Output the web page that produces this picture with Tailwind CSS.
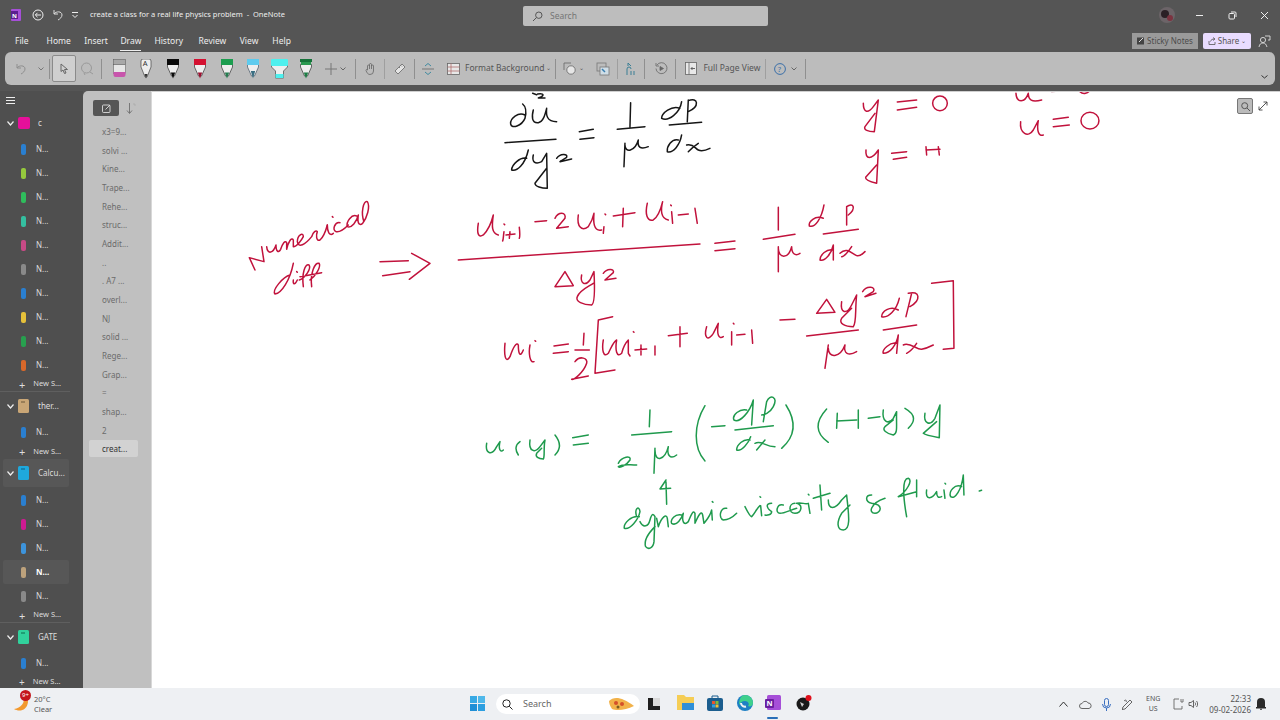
<!DOCTYPE html>
<html><head><meta charset="utf-8"><title>OneNote</title>
<script src="https://cdn.jsdelivr.net/npm/@tailwindcss/browser@4"></script></head>
<body class="m-0">
<div class="w-[1280px] h-[720px] overflow-hidden flex flex-col bg-[#555555] font-['Noto_Sans',sans-serif] text-[#eeeeee]">

<!-- title bar -->
<div class="h-[30px] shrink-0 flex items-center relative">
  <svg class="ml-[11px] w-[10px] h-[12px] shrink-0" viewBox="0 0 10 12"><rect width="10" height="12" rx="1" fill="#a64fd8"/><rect y="2" width="7" height="8" fill="#5a1f8f"/><text x="1" y="8.5" font-size="6" fill="#fff" font-family="Noto Sans" font-weight="700">N</text></svg>
  <svg class="ml-[11px] w-[12px] h-[12px] shrink-0" viewBox="0 0 12 12" fill="none" stroke="#eee" stroke-width="1"><circle cx="6" cy="6" r="5"/><path d="M9 6H3.5M5.5 3.8L3.3 6l2.2 2.2"/></svg>
  <svg class="ml-[8px] w-[12px] h-[12px] shrink-0" viewBox="0 0 12 12" fill="none" stroke="#ddd" stroke-width="1"><path d="M2 1v4h4M2 5c2-3 8-3 8 1 0 2-2 4-4 5"/></svg>
  <svg class="ml-[7px] w-[8px] h-[8px] shrink-0" viewBox="0 0 8 8" fill="none" stroke="#eee" stroke-width="1"><path d="M1 1.5h6"/><path d="M1.5 4L4 6.5 6.5 4"/></svg>
  <span class="ml-[11px] text-[7.5px] leading-none whitespace-nowrap">create a class for a real life physics problem&nbsp; -&nbsp; OneNote</span>
  <div class="absolute left-[523px] top-[6px] w-[245px] h-[20px] bg-[#bdbdbd] rounded-[2px] flex items-center pl-[9px] gap-[7px] text-[#757575] text-[8.5px]">
    <svg class="w-[11px] h-[11px]" viewBox="0 0 11 11" fill="none" stroke="#555" stroke-width="1"><circle cx="6.8" cy="4.2" r="3.2"/><path d="M4.4 6.6L1 10"/></svg><span>Search</span>
  </div>
  <div class="ml-auto flex items-center">
    <svg class="w-[16px] h-[16px]" viewBox="0 0 16 16"><circle cx="8" cy="8" r="8" fill="#6c6468"/><circle cx="6" cy="7" r="4" fill="#2b2025"/><circle cx="11" cy="11" r="3" fill="#7c3340"/></svg>
    <svg class="ml-[20px] w-[9px] h-[9px]" viewBox="0 0 9 9" stroke="#eee"><path d="M1 4.5h7"/></svg>
    <svg class="ml-[24px] w-[9px] h-[9px]" viewBox="0 0 9 9" fill="none" stroke="#eee"><rect x="1" y="2.5" width="5.5" height="5.5" rx="1"/><path d="M3 1h4a1 1 0 011 1v4"/></svg>
    <svg class="ml-[23px] mr-[11px] w-[9px] h-[9px]" viewBox="0 0 9 9" stroke="#eee"><path d="M1 1l7 7M8 1L1 8"/></svg>
  </div>
</div>

<!-- tabs -->
<div class="h-[22px] shrink-0 flex items-center relative text-[8.5px] leading-none">
  <span class="ml-[15px]">File</span>
  <span class="ml-[18px]">Home</span>
  <span class="ml-[13.5px]">Insert</span>
  <span class="ml-[12.5px] relative">Draw<span class="absolute left-0 right-0 top-[13px] h-px bg-[#eee]"></span></span>
  <span class="ml-[13px]">History</span>
  <span class="ml-[15.5px]">Review</span>
  <span class="ml-[13.5px]">View</span>
  <span class="ml-[14px]">Help</span>
  <div class="ml-auto flex items-center h-[16px]">
    <div class="w-[66px] h-[16px] bg-[#9a9a9a] flex items-center justify-center gap-[2px] text-[8px] text-[#4c4c4c]">
      <svg class="w-[8px] h-[8px]" viewBox="0 0 8 8"><rect width="7" height="7" y=".5" fill="#444"/><path d="M2 5l4-4" stroke="#ddd"/></svg>Sticky Notes
    </div>
    <div class="ml-[5px] w-[48px] h-[16px] bg-[#e9dcff] rounded-[2px] flex items-center justify-center gap-[2px] text-[8px] text-[#555]">
      <svg class="w-[8px] h-[8px]" viewBox="0 0 8 8" fill="none" stroke="#555" stroke-width=".8"><path d="M1 4v3.5h6V5"/><path d="M2.5 4.5C3 2.5 4.5 2 6.5 2M5 .5L7 2 5 3.5"/></svg>Share<span class="text-[6px]">⌄</span>
    </div>
    <svg class="ml-[7px] mr-[9px] w-[13px] h-[13px]" viewBox="0 0 13 13" fill="none" stroke="#ddd" stroke-width=".9"><circle cx="5" cy="5" r="2.6"/><path d="M1 12c.5-3 2-4 4-4s3 1 4 4M7 1h5v4h-2"/></svg>
  </div>
</div>

<!-- ribbon -->
<div class="h-[33px] shrink-0 mx-[5px] bg-[#bcbcbc] rounded-[6px] flex items-center text-[#555] relative">
  <svg class="ml-[10px] w-[12px] h-[12px] shrink-0" viewBox="0 0 12 12" fill="none" stroke="#8e8e8e" stroke-width="1"><path d="M2 1v4h4M2 5c2-3 8-3 8 1 0 2-2 4-4 5"/></svg>
  <svg class="ml-[11px] w-[6px] h-[4px] shrink-0" viewBox="0 0 6 4" fill="none" stroke="#777"><path d="M.5.5L3 3 5.500.5"/></svg>
  <span class="ml-[5px] w-px h-[20px] bg-[#8f8f8f] shrink-0"></span>
  <div class="ml-[2px] w-[24px] h-[27px] shrink-0 border border-[#8a8a8a] bg-[#cfcfcf] rounded-[2px] flex items-center justify-center">
    <svg class="w-[9px] h-[11px]" viewBox="0 0 9 11" fill="none" stroke="#666"><path d="M1 1l6.500 5.500H4.500L6 10 4.500 10.500 3 7 1 8.500z"/></svg>
  </div>
  <svg class="ml-[4px] w-[14px] h-[14px] shrink-0" viewBox="0 0 14 14" fill="none" stroke="#999"><circle cx="6.500" cy="6" r="5"/><path d="M10 10l3 2M4 11l1 2"/></svg>
  <span class="ml-[7px] w-px h-[20px] bg-[#8f8f8f] shrink-0"></span>

  <svg class="ml-[11px] w-[13px] h-[19px] shrink-0" viewBox="0 0 13 19"><rect x=".5" y=".5" width="12" height="5" fill="#a8a8a8" stroke="#555" stroke-width=".5"/><rect x=".5" y="5.500" width="12" height="9" fill="#e6e6e6" stroke="#555" stroke-width=".5"/><path d="M.5 13h12v3a2 2 0 01-2 2h-8a2 2 0 01-2-2z" fill="#c855ac"/></svg>
  <svg class="ml-[13px] w-[14px] h-[20px] shrink-0" viewBox="0 0 14 20"><path d="M2 2a2 2 0 012-2h6a2 2 0 012 2v6L8 18H6L2 8z" fill="#eee" stroke="#444" stroke-width=".7"/><text x="3.700" y="7" font-size="7.500" fill="#333" font-family="Noto Sans">A</text><path d="M5.500 15h3L7 19.500z" fill="#333"/></svg>
  <svg class="ml-[13px] w-[14px] h-[20px] shrink-0" viewBox="0 0 14 20"><path d="M1.500 5.500h11V8L8.500 17H5.500L1.500 8z" fill="#eee" stroke="#333" stroke-width=".7"/><rect x="1" width="12" height="6" fill="#0a0a0a"/><path d="M4.800 13.500h4.400L7 19.500z" fill="#0a0a0a"/></svg>
  <svg class="ml-[13px] w-[14px] h-[20px] shrink-0" viewBox="0 0 14 20"><path d="M1.500 5.500h11V8L8.500 17H5.500L1.500 8z" fill="#eee" stroke="#333" stroke-width=".7"/><rect x="1" width="12" height="6" fill="#d41131"/><path d="M4.800 13.500h4.400L7 19.500z" fill="#9c1030"/></svg>
  <svg class="ml-[13px] w-[14px] h-[20px] shrink-0" viewBox="0 0 14 20"><path d="M1.500 5.500h11V8L8.500 17H5.500L1.500 8z" fill="#eee" stroke="#333" stroke-width=".7"/><rect x="1" width="12" height="6" fill="#1d9e50"/><path d="M4.800 13.500h4.400L7 19.500z" fill="#267d51"/></svg>
  <svg class="ml-[12px] w-[14px] h-[20px] shrink-0" viewBox="0 0 14 20"><path d="M1.500 5.500h11V8L8.500 17H5.500L1.500 8z" fill="#eee" stroke="#456" stroke-width=".7"/><rect x="1" width="12" height="6" fill="#5ecbee"/><path d="M4.800 12h4.400L7 19.500z" fill="#3a6e82"/></svg>
  <svg class="ml-[11px] w-[17px] h-[20px] shrink-0" viewBox="0 0 17 20"><path d="M.5 5.500h16V8l-4 4v7h-8v-7l-4-4z" fill="#eee" stroke="#444" stroke-width=".7"/><rect width="17" height="7" rx="1" fill="#4ff0ee"/><path d="M4.500 15h8v4h-8z" fill="#4ff0ee"/></svg>
  <svg class="ml-[11px] w-[14px] h-[20px] shrink-0" viewBox="0 0 14 20"><path d="M1.500 5.500h11V8L8.500 17H5.500L1.500 8z" fill="#eee" stroke="#333" stroke-width=".7"/><rect x="1" width="12" height="3" fill="#16723a"/><rect x="2" y="3" width="10" height="3" fill="#2a9950"/><path d="M4.800 13.500h4.400L7 19.500z" fill="#1d7d45"/></svg>

  <svg class="ml-[12px] w-[12px] h-[12px] shrink-0" viewBox="0 0 12 12" stroke="#777"><path d="M0 6h12M6 0v12"/></svg>
  <svg class="ml-[3px] w-[6px] h-[4px] shrink-0" viewBox="0 0 6 4" fill="none" stroke="#666"><path d="M.5.500L3 3 5.500.500"/></svg>
  <span class="ml-[9px] w-px h-[20px] bg-[#8f8f8f] shrink-0"></span>
  <svg class="ml-[9px] w-[10px] h-[12px] shrink-0" viewBox="0 0 10 12" fill="none" stroke="#666" stroke-width=".8"><path d="M2.500 7V3a1 1 0 012 0M4.500 6V1.500a1 1 0 012 0V6M6.500 3a1 1 0 012 0v5a3.500 3.500 0 01-3.500 3.500C3 11.500 2 10 1 7.500c-.3-1 1-1.500 1.500-.5"/></svg>
  <span class="ml-[9px] w-px h-[20px] bg-[#9f9f9f] shrink-0"></span>
  <svg class="ml-[9px] w-[12px] h-[12px] shrink-0" viewBox="0 0 12 12" fill="#e4e4e4" stroke="#666" stroke-width=".8"><path d="M8 1l3 3-7 7-3-3z"/><path d="M5 4l1 1M7 2.500l1 1" fill="none"/></svg>
  <span class="ml-[8px] w-px h-[20px] bg-[#8f8f8f] shrink-0"></span>
  <svg class="ml-[7px] w-[12px] h-[12px] shrink-0" viewBox="0 0 12 12" fill="none" stroke="#3f8aa0"><path d="M3 3l3-2.500L9 3M3 9l3 2.500L9 9"/><path d="M0 6h12" stroke="#777"/></svg>
  <svg class="ml-[13px] w-[13px] h-[12px] shrink-0" viewBox="0 0 13 12" fill="#e8e8e8" stroke="#666" stroke-width=".8"><rect x=".5" y=".5" width="12" height="11"/><path d="M4 .5v11M.5 4h12M.5 8h12" stroke="#b07070"/></svg>
  <span class="ml-[5px] text-[8.5px] whitespace-nowrap shrink-0">Format Background</span><span class="ml-[2px] text-[6px] shrink-0">⌄</span>
  <span class="ml-[4px] w-px h-[20px] bg-[#8f8f8f] shrink-0"></span>
  <svg class="ml-[7px] w-[13px] h-[13px] shrink-0" viewBox="0 0 13 13" fill="#e6e6e6" stroke="#666" stroke-width=".8"><path d="M1 8V1h7" fill="none"/><circle cx="8" cy="8" r="4.200"/></svg>
  <span class="ml-[3px] text-[6px] shrink-0">⌄</span>
  <svg class="ml-[12px] w-[14px] h-[14px] shrink-0" viewBox="0 0 14 14" fill="none" stroke="#777" stroke-width=".8"><rect x="1" y="1" width="9" height="8"/><rect x="4" y="5" width="9" height="8" fill="#cfdde6"/><path d="M6 7l3 3" stroke="#3a7fb0" stroke-width="1.500"/></svg>
  <span class="ml-[7px] w-px h-[20px] bg-[#9f9f9f] shrink-0"></span>
  <svg class="ml-[6px] w-[12px] h-[14px] shrink-0" viewBox="0 0 12 14" fill="none" stroke="#3a7f95"><path d="M7 4L4 1M4 1v3"/><path d="M3 13V7a2 2 0 014 0M7 9v4M10 9v4" /></svg>
  <span class="ml-[8px] w-px h-[20px] bg-[#8f8f8f] shrink-0"></span>
  <svg class="ml-[10px] w-[13px] h-[13px] shrink-0" viewBox="0 0 13 13" fill="none" stroke="#666" stroke-width=".8"><path d="M2 3a5.500 5.500 0 11-1 3.500M1 1v3h3"/><path d="M5 4.500v4l3.500-2z" fill="#666"/></svg>
  <span class="ml-[7px] w-px h-[20px] bg-[#8f8f8f] shrink-0"></span>
  <svg class="ml-[9px] w-[12px] h-[13px] shrink-0" viewBox="0 0 12 13" fill="#e8e8e8" stroke="#666" stroke-width=".8"><rect x=".5" y=".5" width="11" height="12"/><path d="M4 .5v12" /><path d="M10 6.500H6M7.500 5L6 6.500 7.500 8" fill="none" stroke="#444"/></svg>
  <span class="ml-[6px] text-[8.5px] whitespace-nowrap shrink-0">Full Page View</span>
  <span class="ml-[5px] w-px h-[20px] bg-[#9f9f9f] shrink-0"></span>
  <svg class="ml-[8px] w-[12px] h-[12px] shrink-0" viewBox="0 0 12 12" fill="none" stroke="#3a6fa8"><circle cx="6" cy="6" r="5.400"/><text x="3.800" y="8.800" font-size="7.500" fill="#3a6fa8" stroke="none" font-family="Noto Sans">?</text></svg>
  <svg class="ml-[5px] w-[6px] h-[4px] shrink-0" viewBox="0 0 6 4" fill="none" stroke="#666"><path d="M.5.500L3 3 5.500.500"/></svg>
  <span class="ml-[8px] w-px h-[20px] bg-[#8f8f8f] shrink-0"></span>
  <svg class="absolute right-[7px] bottom-[6px] w-[7px] h-[4px]" viewBox="0 0 7 4" fill="none" stroke="#333"><path d="M.5.500L3.500 3 6.500.500"/></svg>
</div>

<div class="h-[6px] shrink-0"></div>

<!-- main -->
<div class="flex-1 min-h-0 flex">
  <!-- notebooks -->
  <div class="w-[83px] shrink-0 bg-[#4f4f4f] text-[#dddddd] text-[8px] overflow-hidden leading-none">
    <div class="h-[18px] flex items-center pl-[6px]"><svg class="w-[9px] h-[7px]" viewBox="0 0 9 7" stroke="#eee"><path d="M0 .5h9M0 3.500h9M0 6.500h9"/></svg></div>

    <div class="h-[28px] flex items-center"><svg class="ml-[7px] w-[7px] h-[5px]" viewBox="0 0 7 5" fill="none" stroke="#eee" stroke-width="1.200"><path d="M.5.500L3.500 4 6.500.500"/></svg><span class="ml-[4px] w-[12px] h-[12px] rounded-[2px] bg-[#e6109a]"></span><span class="ml-[8px]">c</span></div>
    <div class="h-[24px] flex items-center pl-[21px]"><span class="w-[5px] h-[11px] rounded-[2px] bg-[#2a7fd0]"></span><span class="ml-[10px]">N...</span></div>
    <div class="h-[24px] flex items-center pl-[21px]"><span class="w-[5px] h-[11px] rounded-[2px] bg-[#96c93d]"></span><span class="ml-[10px]">N...</span></div>
    <div class="h-[24px] flex items-center pl-[21px]"><span class="w-[5px] h-[11px] rounded-[2px] bg-[#2fbd5c]"></span><span class="ml-[10px]">N...</span></div>
    <div class="h-[24px] flex items-center pl-[21px]"><span class="w-[5px] h-[11px] rounded-[2px] bg-[#34bfa0]"></span><span class="ml-[10px]">N...</span></div>
    <div class="h-[24px] flex items-center pl-[21px]"><span class="w-[5px] h-[11px] rounded-[2px] bg-[#c84a86]"></span><span class="ml-[10px]">N...</span></div>
    <div class="h-[24px] flex items-center pl-[21px]"><span class="w-[5px] h-[11px] rounded-[2px] bg-[#8a8a8a]"></span><span class="ml-[10px]">N...</span></div>
    <div class="h-[24px] flex items-center pl-[21px]"><span class="w-[5px] h-[11px] rounded-[2px] bg-[#2a7fd0]"></span><span class="ml-[10px]">N...</span></div>
    <div class="h-[24px] flex items-center pl-[21px]"><span class="w-[5px] h-[11px] rounded-[2px] bg-[#e6c13a]"></span><span class="ml-[10px]">N...</span></div>
    <div class="h-[24px] flex items-center pl-[21px]"><span class="w-[5px] h-[11px] rounded-[2px] bg-[#27a04e]"></span><span class="ml-[10px]">N...</span></div>
    <div class="h-[24px] flex items-center pl-[21px]"><span class="w-[5px] h-[11px] rounded-[2px] bg-[#d9682a]"></span><span class="ml-[10px]">N...</span></div>
    <div class="h-[15px] flex items-center pl-[19px] border-b border-[#5f5f5f] mr-[13px]"><span class="text-[11px] leading-none">+</span><span class="ml-[8px] text-[7.5px]">New S...</span></div>

    <div class="h-[28px] flex items-center"><svg class="ml-[7px] w-[7px] h-[5px]" viewBox="0 0 7 5" fill="none" stroke="#eee" stroke-width="1.200"><path d="M.5.500L3.500 4 6.500.500"/></svg><svg class="ml-[4px] w-[12px] h-[14px]" viewBox="0 0 12 14"><rect width="11" height="14" rx="1.500" fill="#c9a676"/><path d="M3 3h4" stroke="#6b5638"/></svg><span class="ml-[8px]">ther...</span></div>
    <div class="h-[24px] flex items-center pl-[21px]"><span class="w-[5px] h-[11px] rounded-[2px] bg-[#2a7fd0]"></span><span class="ml-[10px]">N...</span></div>
    <div class="h-[15px] flex items-center pl-[19px]"><span class="text-[11px] leading-none">+</span><span class="ml-[8px] text-[7.5px]">New S...</span></div>

    <div class="h-[28px] mb-px mx-[3px] w-[66px] rounded-[2px] bg-[#575757] flex items-center"><svg class="ml-[4px] w-[7px] h-[5px]" viewBox="0 0 7 5" fill="none" stroke="#eee" stroke-width="1.200"><path d="M.5.500L3.500 4 6.500.500"/></svg><svg class="ml-[4px] w-[12px] h-[14px]" viewBox="0 0 12 14"><rect width="11" height="14" rx="1.500" fill="#1fa8dc"/><path d="M3 3h4" stroke="#0d5d80"/></svg><span class="ml-[8px]">Calcu...</span></div>
    <div class="h-[24px] flex items-center pl-[21px]"><span class="w-[5px] h-[11px] rounded-[2px] bg-[#2a7fd0]"></span><span class="ml-[10px]">N...</span></div>
    <div class="h-[24px] flex items-center pl-[21px]"><span class="w-[5px] h-[11px] rounded-[2px] bg-[#cf1a92]"></span><span class="ml-[10px]">N...</span></div>
    <div class="h-[24px] flex items-center pl-[21px]"><span class="w-[5px] h-[11px] rounded-[2px] bg-[#3d94dc]"></span><span class="ml-[10px]">N...</span></div>
    <div class="h-[24px] flex items-center pl-[18px] ml-[3px] w-[66px] bg-[#575757] rounded-[2px]"><span class="w-[5px] h-[11px] rounded-[2px] bg-[#bda27c]"></span><span class="ml-[10px] font-bold text-white">N...</span></div>
    <div class="h-[24px] flex items-center pl-[21px]"><span class="w-[5px] h-[11px] rounded-[2px] bg-[#8a8a8a]"></span><span class="ml-[10px]">N...</span></div>
    <div class="h-[15px] flex items-center pl-[19px] border-b border-[#5f5f5f] mr-[13px]"><span class="text-[11px] leading-none">+</span><span class="ml-[8px] text-[7.5px]">New S...</span></div>

    <div class="h-[28px] flex items-center"><svg class="ml-[7px] w-[7px] h-[5px]" viewBox="0 0 7 5" fill="none" stroke="#eee" stroke-width="1.200"><path d="M.5.500L3.500 4 6.500.500"/></svg><svg class="ml-[4px] w-[12px] h-[14px]" viewBox="0 0 12 14"><rect width="11" height="14" rx="1.500" fill="#31d19c"/><path d="M3 3h4" stroke="#0f6b4c"/></svg><span class="ml-[8px]">GATE</span></div>
    <div class="h-[24px] flex items-center pl-[21px]"><span class="w-[5px] h-[11px] rounded-[2px] bg-[#2a7fd0]"></span><span class="ml-[10px]">N...</span></div>
    <div class="h-[13px] flex items-center pl-[19px]"><span class="text-[10px] leading-none">+</span><span class="ml-[8px] text-[7.5px]">New S...</span></div>
  </div>

  <!-- pages -->
  <div class="w-[69px] shrink-0 bg-[#c0c0c0] rounded-tl-[5px] text-[8px] text-[#6b6b6b] leading-none border-r border-[#d8d8d8]">
    <div class="h-[31.5px] flex items-center pl-[10px] pt-[3px]">
      <div class="w-[26px] h-[16px] rounded-[2px] bg-[#555] flex items-center justify-center"><svg class="w-[9px] h-[9px]" viewBox="0 0 9 9" fill="none" stroke="#eee" stroke-width=".8"><rect x=".5" y="1" width="7.500" height="7.500" rx="1"/><path d="M3.500 5.500L8 1"/></svg></div>
      <svg class="ml-[7px] w-[10px] h-[11px]" viewBox="0 0 10 11" fill="none" stroke="#666" stroke-width=".8"><path d="M3.500 0v10M1 7.500L3.500 10.500 6 7.500"/><path d="M7 1h2v2" stroke="#aaa"/></svg>
    </div>
    <div class="pl-[19px] h-[18.7px] flex items-center">x3=9...</div>
    <div class="pl-[19px] h-[18.7px] flex items-center">solvi ...</div>
    <div class="pl-[19px] h-[18.7px] flex items-center">Kine...</div>
    <div class="pl-[19px] h-[18.7px] flex items-center">Trape...</div>
    <div class="pl-[19px] h-[18.7px] flex items-center">Rehe...</div>
    <div class="pl-[19px] h-[18.7px] flex items-center">struc...</div>
    <div class="pl-[19px] h-[18.7px] flex items-center">Addit...</div>
    <div class="pl-[19px] h-[18.7px] flex items-center">..</div>
    <div class="pl-[19px] h-[18.7px] flex items-center">. A7 ...</div>
    <div class="pl-[19px] h-[18.7px] flex items-center">overl...</div>
    <div class="pl-[19px] h-[18.7px] flex items-center">NJ</div>
    <div class="pl-[19px] h-[18.7px] flex items-center">solid ...</div>
    <div class="pl-[19px] h-[18.7px] flex items-center">Rege...</div>
    <div class="pl-[19px] h-[18.7px] flex items-center">Grap...</div>
    <div class="pl-[19px] h-[18.7px] flex items-center">=</div>
    <div class="pl-[19px] h-[18.7px] flex items-center">shap...</div>
    <div class="pl-[19px] h-[18.7px] flex items-center">2</div>
    <div class="ml-[6px] w-[49px] pl-[13px] h-[17px] flex items-center bg-[#d2d2d2] rounded-[2px] text-[#333]">creat...</div>
  </div>

  <!-- canvas -->
  <div class="flex-1 bg-white relative overflow-hidden border-t border-[#d0d0d0]">
    <svg class="absolute inset-0 w-full h-full" viewBox="152 92 1128 596" fill="none" stroke-linecap="round" stroke-linejoin="round">
      <!-- black ink -->
      <g transform="translate(240 90) scale(.3333)" stroke="#161616" stroke-width="4.500">
        <path d="M878 10L890 14M893 12C905 10 915 12 905 20L895 24L915 24"/>
        <path d="M855 75C835 65 810 85 812 102C815 118 845 108 855 85C860 65 858 50 848 42"/>
        <path d="M880 60C875 80 875 100 895 98C910 95 915 75 920 55C918 75 920 95 950 95"/>
        <path d="M795 158L948 148"/>
        <path d="M860 205C840 200 815 225 815 240C830 245 855 225 865 180"/>
        <path d="M880 195C875 215 885 225 905 215L920 190L922 295C905 295 885 290 885 280L920 235"/>
        <path d="M950 205C960 190 985 190 980 202L960 215L995 207"/>
        <path d="M1018 125L1060 118M1020 148L1062 143"/>
        <path d="M1172 38L1170 110M1132 118L1215 110"/>
        <path d="M1155 160L1152 230M1155 165C1155 190 1185 185 1195 150C1192 170 1200 180 1225 170"/>
        <path d="M1320 55C1295 45 1265 70 1265 85C1285 95 1320 70 1325 35"/>
        <path d="M1345 30L1342 95M1345 32C1375 20 1380 50 1345 65M1288 105L1385 97"/>
        <path d="M1315 150C1295 145 1280 170 1282 185C1300 190 1320 165 1325 135"/>
        <path d="M1340 165C1360 160 1365 175 1375 180C1385 185 1400 180 1410 175M1375 160C1360 170 1350 180 1345 185"/>
      </g>
      <!-- red ink: numerical diff, finite difference -->
      <g transform="translate(240 90) scale(.3333)" stroke="#c1123c" stroke-width="4.500">
        <path d="M45 540L28 503L72 515L65 470"/>
        <path d="M80 470C82 495 100 490 108 465C108 485 115 490 122 478C128 460 135 450 140 458L140 478C145 455 155 440 160 450L160 470C170 470 185 450 190 440C190 425 172 435 172 455C175 475 195 465 215 440C220 425 228 420 232 425C228 435 228 455 240 450C252 440 258 420 262 405"/>
        <path d="M262 405C262 425 268 440 280 430M277 380L279 382"/>
        <path d="M300 398C285 395 275 420 288 425C300 428 315 415 325 405"/>
        <path d="M350 378C335 372 318 395 322 410C335 415 350 395 355 375C352 395 355 410 368 400C380 385 392 350 382 335C370 330 362 370 372 395"/>
        <path d="M150 555C130 560 95 600 105 612C125 610 150 570 160 520"/>
        <path d="M160 570C158 585 165 585 172 570M170 545L172 547"/>
        <path d="M190 590C185 550 195 520 207 525C215 535 195 565 178 570M215 590C210 550 225 515 237 520C245 530 225 560 210 570M180 560L245 548"/>
        <path d="M420 515L505 512M428 557L510 545M515 490L570 520L508 568"/>
        <path d="M715 400C710 430 715 445 730 435C745 420 755 395 760 375C755 410 755 430 775 435"/>
        <path d="M792 425C790 440 790 450 788 453M792 402L794 404M810 425L808 445M798 435L825 432M838 412C840 430 840 440 838 445"/>
        <path d="M885 395L920 392M945 385C955 365 980 365 975 385L950 415L985 410"/>
        <path d="M1015 375C1010 410 1025 425 1045 410C1055 395 1060 380 1062 370C1060 395 1060 425 1085 420M1092 410L1090 430M1095 372L1097 374"/>
        <path d="M1150 355L1148 410M1120 378L1185 368"/>
        <path d="M1222 340C1215 370 1220 395 1240 390C1255 380 1262 360 1268 335C1262 360 1262 385 1285 390M1295 365L1298 400M1292 345L1294 347M1315 375L1345 372M1365 355L1372 400"/>
        <path d="M655 510L1380 462M1425 460L1485 453M1425 482L1485 476"/>
        <path d="M975 545L945 590L1000 587Z"/>
        <path d="M1025 555C1020 580 1035 590 1050 570L1062 545C1065 600 1065 640 1055 645C1030 645 1005 635 1012 620C1020 600 1045 590 1060 580"/>
        <path d="M1090 550C1100 535 1125 535 1120 548L1095 570L1128 565"/>
      </g>
      <!-- red ink: boundary conditions -->
      <g transform="translate(700 90) scale(.3333)" stroke="#c1123c" stroke-width="4.500">
        <path d="M490 40C490 70 505 70 520 50L535 30L523 125C505 125 490 120 495 110L525 70"/>
        <path d="M592 60L650 52M592 36L650 30"/>
        <ellipse cx="720" cy="40" rx="22" ry="22"/>
        <path d="M498 180C495 210 515 210 535 180L530 280C510 275 495 270 497 262L530 225"/>
        <path d="M575 190L620 185M580 208L620 202M678 170L680 195M715 170L718 195M678 180L720 178"/>
        <path d="M948 10C950 40 975 40 985 10C985 30 995 38 1025 30M1140 5C1150 15 1165 10 1170 0"/>
        <path d="M1055 5L1085 2" stroke="#cfa0ae"/>
        <path d="M962 95C958 130 985 145 1000 120L1015 92C1010 120 1015 140 1030 135M1060 88L1105 82M1060 110L1108 105"/>
        <ellipse cx="1170" cy="92" rx="27" ry="25"/>
        <path d="M235 352L235 420M190 448L285 433"/>
        <path d="M235 470L235 545M235 475C235 505 265 510 275 470C275 490 285 500 300 490"/>
        <path d="M370 385C345 375 325 395 328 408C345 415 365 385 372 345"/>
        <path d="M440 405L440 350C460 335 470 355 445 375M370 432L475 418"/>
        <path d="M400 480C380 475 360 495 360 510C375 515 395 490 400 465L400 510"/>
        <path d="M420 490C440 470 455 490 470 497C480 500 490 490 495 485M455 470C445 485 435 500 425 500"/>
      </g>
      <!-- red ink: update formula -->
      <g transform="translate(480 270) scale(.3333)" stroke="#c1123c" stroke-width="4.500">
        <path d="M75 220C72 250 75 285 90 260C100 230 110 215 115 225C115 250 120 265 130 240M150 225C145 250 150 280 162 275M165 212L167 214"/>
        <path d="M222 228L265 222M220 250L265 245M312 190L310 225M285 240L328 240"/>
        <path d="M285 275C300 255 325 265 320 280C310 310 280 330 275 328L325 318"/>
        <path d="M398 140L355 150L345 310L405 300"/>
        <path d="M370 210C365 240 370 265 385 250C395 230 400 215 410 210C405 240 410 265 425 250C430 230 440 215 445 210L445 250L450 258M460 185L462 187M465 240L500 237M483 225L483 255M525 228L525 255"/>
        <path d="M600 170L600 230M565 197L622 190"/>
        <path d="M680 170C670 205 685 215 700 190L715 160C710 190 715 210 730 200M755 185L755 225M760 160L762 162M770 195L795 193M815 180L818 220"/>
        <path d="M900 150L945 148"/>
        <path d="M1040 88L1010 130L1065 127Z"/>
        <path d="M1085 95C1080 130 1100 135 1115 105L1130 75C1125 120 1130 160 1120 170C1095 170 1075 160 1085 145L1115 115"/>
        <path d="M1148 65C1160 45 1190 50 1180 65L1155 80L1188 70M980 198L1135 180"/>
        <path d="M1045 225L1035 295M1045 235C1045 265 1080 265 1095 225C1090 250 1105 260 1130 245"/>
        <path d="M1255 120C1230 105 1205 125 1205 140C1225 145 1250 120 1258 85M1285 70C1320 60 1325 90 1290 110M1295 70L1278 140M1210 180L1310 165"/>
        <path d="M1250 220C1230 215 1205 240 1210 250C1230 250 1250 225 1255 195L1250 250M1270 225C1290 215 1310 240 1325 238C1340 235 1350 230 1360 225M1310 220C1300 235 1290 245 1280 250"/>
        <path d="M1355 40L1420 32L1422 235L1390 238"/>
      </g>
      <!-- green ink -->
      <g transform="translate(480 385) scale(.3333)" stroke="#1f9a4d" stroke-width="4.500">
        <path d="M20 175C15 205 35 215 50 185L60 170C55 190 60 205 70 195M120 170C105 180 105 195 115 210"/>
        <path d="M150 165C145 200 165 205 180 185L195 165C190 190 195 215 190 222C175 222 165 215 170 205L185 190M225 150C245 175 240 195 225 210"/>
        <path d="M278 158L325 150M280 180L325 175M510 75L508 125M455 150L575 140"/>
        <path d="M415 235C425 215 455 210 450 225C440 240 420 250 415 245C430 235 445 240 470 240"/>
        <path d="M525 190L522 265M525 195C525 235 555 225 565 185C560 210 570 225 590 210"/>
        <path d="M675 62C640 120 640 190 675 228M695 125L735 122"/>
        <path d="M800 75C780 70 755 90 762 105C780 115 810 80 820 45L815 120M850 110L860 50C870 25 895 35 880 65C870 85 850 90 845 90M765 135L880 122"/>
        <path d="M810 165C790 160 770 180 770 195C785 200 805 175 812 155M825 175C845 165 855 185 885 185M855 165L830 195"/>
        <path d="M918 60C950 110 945 155 905 190M1040 72C1005 110 1005 145 1045 172"/>
        <path d="M1072 85L1070 130M1070 108L1130 105M1135 75L1135 130M1165 100L1200 95"/>
        <path d="M1210 75C1205 110 1225 120 1240 100L1250 80C1248 120 1255 145 1240 150C1220 145 1205 135 1215 125L1240 105M1275 70C1310 90 1305 110 1285 130"/>
        <path d="M1335 85C1330 115 1350 125 1365 100L1380 60L1378 158C1360 155 1335 150 1330 145L1370 110"/>
        <path d="M558 290L560 358M558 285L540 312L572 310"/>
        <path d="M478 395C455 390 430 415 433 430C450 435 475 405 480 380C478 360 462 370 470 395"/>
        <path d="M480 410C490 430 505 425 510 405C515 385 520 385 525 395L522 470C520 490 505 495 497 485C490 465 510 440 525 425"/>
        <path d="M530 400L535 425C545 395 560 385 562 400L565 425M605 390C585 385 570 405 575 415C590 425 605 400 610 385C605 405 610 425 625 410C635 385 640 375 645 385L645 415C655 390 665 375 668 390L672 415C680 405 690 395 695 375L697 405M697 350L699 352"/>
        <path d="M740 370C720 365 715 400 730 405C745 405 760 395 770 385"/>
        <path d="M795 365C805 385 810 395 815 395C825 385 830 370 840 362M842 362L845 392M840 335L842 337M875 355C855 355 860 370 875 380C875 390 860 392 855 390"/>
        <path d="M910 360C890 355 885 385 900 385C915 385 930 375 950 370M945 355C925 355 925 385 945 385C965 385 970 360 950 355C965 350 975 360 985 355L990 385M985 328L987 330"/>
        <path d="M1020 300L1025 375M1000 340L1050 325M1045 345C1045 375 1065 375 1085 345L1100 330C1105 380 1115 435 1090 435C1070 435 1070 410 1085 385L1110 360"/>
        <path d="M1175 330C1155 330 1155 350 1175 355C1215 360 1200 385 1185 385C1165 385 1170 355 1215 340"/>
        <path d="M1280 395C1270 340 1265 280 1285 280C1300 285 1280 320 1255 335L1310 320M1310 285L1310 335"/>
        <path d="M1340 315C1335 345 1355 345 1370 320C1370 335 1375 340 1385 335M1392 315L1395 340M1395 295L1397 297"/>
        <path d="M1445 305C1425 295 1405 320 1412 335C1425 345 1445 315 1450 270L1452 330M1498 318L1505 316"/>
      </g>
    </svg>
    <div class="absolute left-[1085px] top-[6px] w-[16px] h-[16px] bg-[#bbbbbb] border border-[#777] rounded-[2px] flex items-center justify-center">
      <svg class="w-[9px] h-[9px]" viewBox="0 0 9 9" fill="none" stroke="#555"><circle cx="3.700" cy="3.700" r="3"/><path d="M6 6l3 3"/></svg>
    </div>
    <svg class="absolute left-[1106px] top-[9px] w-[10px] h-[10px]" viewBox="0 0 10 10" fill="none" stroke="#444" stroke-width=".9"><path d="M1 9L9 1M5.500 1H9v3.500M1 5.500V9h3.500"/></svg>
  </div>
</div>

<!-- taskbar -->
<div class="h-[32px] shrink-0 bg-[#eef0f3] flex items-center relative text-[#444]">
  <svg class="ml-[13px] w-[16px] h-[18px] shrink-0" viewBox="0 0 16 18"><path d="M11 1C12 8 8 13 1 14 6 17 14 16 15 7 15 4 13 2 11 1z" fill="#f2992e"/></svg>
  <div class="absolute left-[20px] top-[2px] w-[11px] h-[11px] rounded-full bg-[#c4161c] text-white text-[6px] leading-[11px] text-center">9+</div>
  <div class="ml-[5px] text-[7.5px] leading-[10px] text-[#555]"><div>20°C</div><div>Clear</div></div>

  <div class="absolute left-[470px] top-[8px] w-[15px] h-[15px] grid grid-cols-2 gap-px">
    <span class="bg-[#38a9e4]"></span><span class="bg-[#4fb8ea]"></span><span class="bg-[#1f8fd6]"></span><span class="bg-[#2d9fe0]"></span>
  </div>
  <div class="absolute left-[496px] top-[6px] w-[144px] h-[20px] bg-white rounded-full flex items-center pl-[6px] text-[9px] text-[#666]">
    <svg class="w-[11px] h-[11px]" viewBox="0 0 11 11" fill="none" stroke="#222"><circle cx="4.500" cy="4.500" r="3.700"/><path d="M7.300 7.300L10.500 10.500"/></svg>
    <span class="ml-[10px]">Search</span>
    <svg class="ml-auto mr-[5px] w-[27px] h-[14px]" viewBox="0 0 27 14"><path d="M1 4C6-1 14 0 26 9 18 13 9 14 4 12 2 9 1 6 1 4z" fill="#f2b24a"/><circle cx="8" cy="6" r="2" fill="#d4502a"/><circle cx="14" cy="7" r="2" fill="#d4502a"/><circle cx="10" cy="10" r="1.500" fill="#7a5a20"/></svg>
  </div>
  <svg class="absolute left-[648px] top-[10px] w-[12px] h-[12px]" viewBox="0 0 12 12"><rect width="12" height="12" fill="#1e1e1e"/><rect x="5" width="7" height="8" fill="#d9d9d9"/></svg>
  <svg class="absolute left-[677px] top-[7px] w-[17px] h-[15px]" viewBox="0 0 17 15"><path d="M0 0h7l2 2h8v13H0z" fill="#f5cd55"/><rect y="8" x="5" width="12" height="7" fill="#2f8fd8"/></svg>
  <svg class="absolute left-[707px] top-[7px] w-[16px] h-[16px]" viewBox="0 0 16 16"><rect y="3" width="16" height="13" rx="2" fill="#1b5e8f"/><path d="M5 3V1h6v2" fill="none" stroke="#1b5e8f"/><rect x="5" y="6" width="3" height="3" fill="#e8542e"/><rect x="8.500" y="6" width="3" height="3" fill="#7cbb3b"/><rect x="5" y="9.500" width="3" height="3" fill="#2f9fe0"/><rect x="8.500" y="9.500" width="3" height="3" fill="#f4c02e"/></svg>
  <svg class="absolute left-[737px] top-[7px] w-[16px] h-[16px]" viewBox="0 0 16 16"><circle cx="8" cy="8" r="8" fill="#1d7fc4"/><path d="M8 0a8 8 0 018 8c0 3-3 4-5 3 2-2 0-5-3-5-3 0-5 2-6 4 0-6 2-10 6-10z" fill="#3ed08c"/><path d="M4 8c0 3 3 4 5 3.500" stroke="#eef0f3" stroke-width="2" fill="none"/></svg>
  <svg class="absolute left-[765px] top-[7px] w-[16px] h-[16px]" viewBox="0 0 16 16"><rect x="2" width="14" height="15" rx="1.500" fill="#a64fd8"/><rect y="4" width="9" height="9" rx="1" fill="#6a1fa0"/><text x="1.500" y="11" font-size="7.500" fill="#fff" font-family="Noto Sans" font-weight="700">N</text></svg>
  <span class="absolute left-[767px] top-[29px] w-[11px] h-[2px] bg-[#2a6fb8] rounded-full"></span>
  <svg class="absolute left-[796px] top-[7px] w-[16px] h-[16px]" viewBox="0 0 16 16"><circle cx="7" cy="9" r="6.500" fill="#1a1a1a"/><path d="M4 7l4 2-2 3z" fill="#ccc"/><circle cx="12.500" cy="3" r="3" fill="#e0101c"/></svg>

  <div class="ml-auto flex items-center shrink-0">
    <svg class="w-[9px] h-[6px]" viewBox="0 0 9 6" fill="none" stroke="#333"><path d="M.5 5.500L4.500 1l4 4.500"/></svg>
    <svg class="ml-[11px] w-[13px] h-[9px]" viewBox="0 0 13 9" fill="none" stroke="#666"><path d="M3 8.500a2.500 2.500 0 010-5C4 1 8 .5 9 3a2.800 2.800 0 011 5.500z"/></svg>
    <svg class="ml-[10px] w-[9px] h-[13px]" viewBox="0 0 9 13" fill="none" stroke="#3a6fc0"><rect x="2.500" y=".5" width="4" height="8" rx="2"/><path d="M.5 6a4 4 0 008 0M4.500 10v3"/></svg>
    <svg class="ml-[11.5px] w-[12px] h-[12px]" viewBox="0 0 12 12" fill="none" stroke="#555" stroke-width=".9"><path d="M1 9l7-7 2 2-7 7-3 .5zM2 3c2-2 3 0 2 1"/></svg>
    <div class="ml-[11px] w-[16px] text-center text-[7px] leading-[10px] text-[#555]"><div>ENG</div><div>US</div></div>
    <svg class="ml-[12px] w-[11px] h-[12px]" viewBox="0 0 11 12" fill="none" stroke="#666" stroke-width=".9"><path d="M6 1H1v10h8V8"/><path d="M8 1v3h2V1" /></svg>
    <svg class="ml-[4px] w-[10px] h-[10px]" viewBox="0 0 10 10" fill="none" stroke="#555" stroke-width=".9"><path d="M1 3.500v3h2l2.500 2v-7L3 3.500zM7 3.500c.8 1 .8 2 0 3M8.500 2c1.500 1.500 1.500 4.500 0 6"/></svg>
    <div class="ml-[11px] text-right text-[8px] leading-[11px] text-[#555] whitespace-nowrap"><div>22:33</div><div>09-02-2026</div></div>
    <svg class="ml-[5px] mr-[14px] w-[10px] h-[12px]" viewBox="0 0 10 12" fill="#2a2a2a"><path d="M1 9V4a4 4 0 018 0v5z"/><rect y="9" width="10" height="1.500"/><circle cx="5" cy="11.300" r=".8"/></svg>
  </div>
</div>
</div>
</body></html>
